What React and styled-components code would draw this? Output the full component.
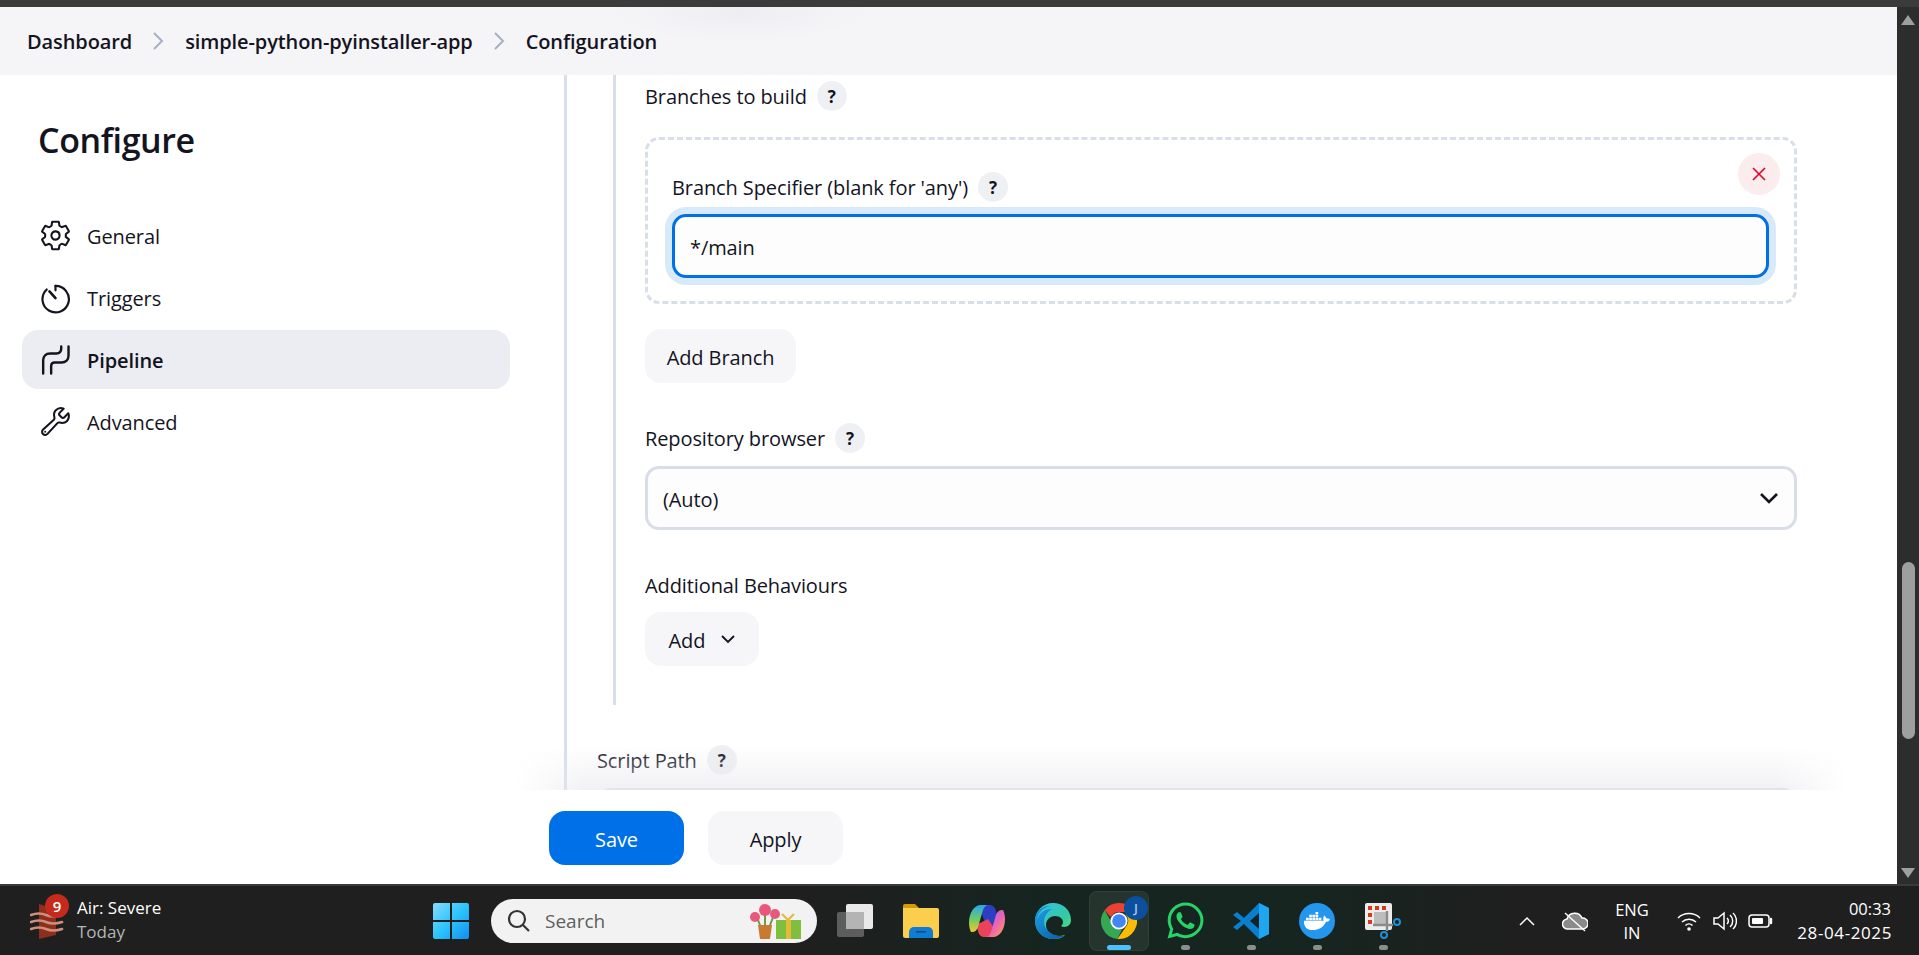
import React from "react";
import styled, { createGlobalStyle } from "styled-components";
import { IoSettingsOutline, IoBuildOutline } from "react-icons/io5";
import { FaWhatsapp, FaDocker } from "react-icons/fa";

const uiFont = `"Open Sans", "Noto Sans", "Liberation Sans", sans-serif`;

const GlobalStyle = createGlobalStyle`
  html, body {
    margin: 0;
    height: 100%;
    overflow: hidden;
    background: #fff;
  }
  #root {
    height: 100%;
  }
  * {
    box-sizing: border-box;
  }
`;

const Shell = styled.div`
  display: flex;
  flex-direction: column;
  height: 955px;
  font-family: ${uiFont};
  color: #14141f;
`;

const TopStrip = styled.div`
  height: 7px;
  flex: none;
  background: #3b3b3b;
`;

const Viewport = styled.div`
  display: flex;
  flex: 1;
  min-height: 0;
`;

const Page = styled.div`
  display: flex;
  flex-direction: column;
  flex: 1;
  min-width: 0;
  background: #fff;
`;

const Breadcrumbs = styled.nav`
  display: flex;
  align-items: center;
  height: 68px;
  flex: none;
  padding-left: 27px;
  background: radial-gradient(ellipse 130px 32px at 740px 4px, #eeeef2, rgba(238, 238, 242, 0)), #f5f5f8;
  font-size: 20px;
  font-weight: 550;
  letter-spacing: -0.1px;
`;

const Crumb = styled.span`
  white-space: nowrap;
`;

const CrumbSep = styled.svg`
  width: 12px;
  height: 18px;
  margin: 0 21px 0 20px;
  fill: none;
  stroke: #a4b0c6;
  stroke-width: 2;
`;

const Body = styled.div`
  display: flex;
  flex: 1;
  min-height: 0;
`;

const Sidebar = styled.aside`
  width: 564px;
  flex: none;
  padding: 41px 54px 0 22px;
`;

const Heading = styled.h1`
  margin: 0 0 42px 16px;
  font-size: 34px;
  line-height: 48px;
  font-weight: 600;
  letter-spacing: -0.4px;
`;

const SideItem = styled.div`
  display: flex;
  align-items: center;
  gap: 15px;
  height: 59px;
  margin-bottom: 3px;
  padding: 2px 0 0 17px;
  border-radius: 16px;
  font-size: 20px;
  letter-spacing: -0.1px;
  font-weight: ${(p) => (p.$active ? 600 : 400)};
  background: ${(p) => (p.$active ? "#ecedf2" : "transparent")};

  svg {
    width: 33px;
    height: 33px;
    flex: none;
    margin-top: -2px;
  }
`;

const Main = styled.main`
  flex: 1;
  min-width: 0;
  overflow: hidden;
  padding-right: 100px;
`;

const Section = styled.div`
  border-left: 3px solid #d8dfea;
  padding-left: 30px;
`;

const NestedSection = styled.div`
  margin-left: 16px;
  border-left: 3px solid #d8dfea;
  padding: 6px 0 39px 29px;
`;

const LabelRow = styled.div`
  display: flex;
  align-items: center;
  gap: 10px;
  height: 30px;
  margin-top: ${(p) => p.$top || 0}px;
  font-size: 20px;
  letter-spacing: -0.1px;
  white-space: nowrap;
`;

const Help = styled.span`
  display: flex;
  align-items: center;
  justify-content: center;
  width: 30px;
  height: 30px;
  border-radius: 50%;
  background: #eef0f3;
  font-size: 17px;
  font-weight: 700;
  letter-spacing: 0;
`;

const RepeatBox = styled.div`
  position: relative;
  margin-top: 26px;
  height: 167px;
  padding: 32px 25px 0 24px;
  border: 3px dashed #d8dfea;
  border-radius: 14px;
`;

const CloseButton = styled.button`
  position: absolute;
  top: 13px;
  right: 14px;
  display: flex;
  align-items: center;
  justify-content: center;
  width: 42px;
  height: 42px;
  padding: 0;
  border: 0;
  border-radius: 50%;
  background: #fbeced;

  svg {
    width: 16px;
    height: 16px;
    stroke: #e6002a;
    stroke-width: 1.6;
    fill: none;
  }
`;

const Field = styled.div`
  display: flex;
  align-items: center;
  justify-content: space-between;
  height: 64px;
  margin-top: ${(p) => p.$top || 0}px;
  padding: 2px 15px 0;
  border: 3px solid ${(p) => (p.$focus ? "#0070e8" : "#d8dde8")};
  border-radius: 14px;
  background: #fdfdfd;
  font-size: 20px;
  letter-spacing: -0.1px;
  box-shadow: ${(p) => (p.$focus ? "0 0 0 7px #d8e9fa" : "none")};
`;

const FieldChevron = styled.svg`
  width: 20px;
  height: 12px;
  margin: -2px 0 0;
  fill: none;
  stroke: #14141f;
  stroke-width: 2.6;
`;

const Button = styled.button`
  display: flex;
  align-items: center;
  justify-content: center;
  gap: 16px;
  width: ${(p) => p.$w}px;
  height: 54px;
  margin-top: ${(p) => p.$top || 0}px;
  padding: 2px 0 0;
  border: 0;
  border-radius: 16px;
  font-family: inherit;
  font-size: 20px;
  letter-spacing: -0.1px;
  color: ${(p) => (p.$primary ? "#fff" : "#14141f")};
  background: ${(p) => (p.$primary ? "#0070e8" : "#f6f6f9")};
  font-weight: ${(p) => (p.$primary ? 500 : 400)};
`;

const SmallChevron = styled.svg`
  width: 14px;
  height: 9px;
  margin-top: -1px;
  fill: none;
  stroke: #14141f;
  stroke-width: 1.9;
`;

const Footer = styled.footer`
  position: relative;
  display: flex;
  gap: 24px;
  height: 94px;
  flex: none;
  padding: 21px 0 0 549px;
  background: #fff;

  &::before {
    content: "";
    position: absolute;
    left: 515px;
    right: 50px;
    bottom: 100%;
    height: 44px;
    background: linear-gradient(to bottom, rgba(232, 232, 238, 0), rgba(232, 232, 238, 0.6));
    mask-image: linear-gradient(to right, transparent, #000 70px, #000 calc(100% - 70px), transparent);
    pointer-events: none;
  }
`;

const Scrollbar = styled.div`
  display: flex;
  flex-direction: column;
  align-items: center;
  width: 22px;
  flex: none;
  background: #2d2d2d;
`;

const Thumb = styled.div`
  width: 13px;
  height: 177px;
  margin-top: 537px;
  border-radius: 7px;
  background: #9f9f9f;
`;

const ScrollArrow = styled.svg`
  width: 14px;
  height: 10px;
  margin: ${(p) => p.$m};
  fill: #9f9f9f;
`;

const Taskbar = styled.div`
  display: flex;
  align-items: center;
  height: 71px;
  flex: none;
  border-top: 2px solid #3a3a3a;
  background: linear-gradient(to right, #1f1f1f 0, #1f1f1f 800px, #16251f 1050px, #16251f 1300px, #1f1f1f 1520px);
  font-family: ${uiFont};
  color: #fff;
`;

const Widget = styled.div`
  position: relative;
  display: flex;
  align-items: center;
  width: 418px;
  flex: none;
  padding-left: 30px;
  gap: 13px;

  svg {
    width: 34px;
    height: 38px;
  }
`;

const Badge = styled.span`
  position: absolute;
  left: 45px;
  top: -4px;
  display: flex;
  align-items: center;
  justify-content: center;
  width: 24px;
  height: 24px;
  border-radius: 50%;
  background: #c42b1c;
  font-size: 15px;
  font-weight: 600;
`;

const WidgetText = styled.div`
  display: flex;
  flex-direction: column;
  margin-top: -2px;
  font-size: 17px;
  line-height: 24px;
`;

const Muted = styled.span`
  color: #b5b5b5;
`;

const Slot = styled.div`
  position: relative;
  display: flex;
  align-items: center;
  justify-content: center;
  width: 66px;
  height: 60px;
  flex: none;

  &[data-active="true"]::before {
    content: "";
    position: absolute;
    inset: 0 3px;
    border-radius: 8px;
    background: rgba(255, 255, 255, 0.07);
    border: 1px solid rgba(255, 255, 255, 0.05);
  }

  > svg {
    position: relative;
    width: 36px;
    height: 36px;
  }
`;

const WhatsappIcon = styled(FaWhatsapp)`
  && {
    width: 41px;
    height: 41px;
  }
  color: #25d366;
`;

const RunDot = styled.span`
  position: absolute;
  left: 50%;
  bottom: 1px;
  height: 5px;
  width: ${(p) => (p.$active ? 24 : 9)}px;
  margin-left: ${(p) => (p.$active ? -12 : -4)}px;
  border-radius: 3px;
  background: ${(p) => (p.$active ? "#4cc2ff" : "#8a8f8c")};
`;

const ProfileBadge = styled.span`
  position: absolute;
  right: 4px;
  top: 5px;
  display: flex;
  align-items: center;
  justify-content: center;
  width: 24px;
  height: 24px;
  border-radius: 50%;
  background: #0b4f9e;
  color: #a9c6ea;
  font-size: 13px;
  font-weight: 600;
`;

const SearchBox = styled.div`
  display: flex;
  align-items: center;
  width: 326px;
  height: 44px;
  flex: none;
  margin: 0 5px 0 7px;
  padding: 0 14px 0 16px;
  border-radius: 22px;
  background: #f2f2f2;
  color: #5e5e5e;
  font-size: 19px;
`;

const SearchIcon = styled.svg`
  width: 23px;
  height: 23px;
  margin-right: 15px;
  fill: none;
  stroke: #333;
  stroke-width: 2.2;
`;

const SearchArt = styled.svg`
  width: 52px;
  height: 36px;
  margin-left: auto;
  margin-right: 1px;
`;

const Tray = styled.div`
  display: flex;
  align-items: center;
  margin-left: auto;
  padding-right: 28px;
  color: #fff;
`;

const TrayIcon = styled.svg`
  width: ${(p) => p.$w}px;
  height: 24px;
  margin-right: ${(p) => p.$mr}px;
  flex: none;
  fill: none;
  stroke: #fff;
  stroke-width: 1.5;
`;

const Lang = styled.div`
  display: flex;
  flex-direction: column;
  align-items: center;
  width: 50px;
  margin-right: 19px;
  font-size: 16.5px;
  line-height: 23px;
`;

const Clock = styled.div`
  display: flex;
  flex-direction: column;
  align-items: flex-end;
  width: 117px;
  font-size: 16.5px;
  line-height: 24px;
`;

const ClockDate = styled.span`
  font-size: 17px;
  letter-spacing: 0.6px;
  margin-right: -1px;
`;

function WeatherIcon() {
  return (
    <svg viewBox="0 0 34 38">
      <path d="M9 2 L26 7 V33 L9 37 Z" fill="#8c2f1c" />
      <path d="M1 13 q8 -3 15 0 t16 0 M1 20 q8 -3 15 0 t16 0 M1 27 q8 -3 15 0 t16 0" stroke="#d08f7c" strokeWidth="2.6" fill="none" strokeLinecap="round" />
    </svg>
  );
}

function WindowsLogo() {
  return (
    <svg viewBox="0 0 36 36">
      <defs>
        <linearGradient id="win" x1="0" y1="0" x2="1" y2="1">
          <stop offset="0" stopColor="#86dcff" />
          <stop offset="0.5" stopColor="#2dc4fb" />
          <stop offset="1" stopColor="#0f8ff0" />
        </linearGradient>
      </defs>
      <path d="M2 0h15v17H0V2a2 2 0 0 1 2-2zM19 0h15a2 2 0 0 1 2 2v15H19zM0 19h17v17H2a2 2 0 0 1-2-2zM19 19h17v15a2 2 0 0 1-2 2H19z" fill="url(#win)" />
    </svg>
  );
}

function TaskView() {
  return (
    <svg viewBox="0 0 36 36">
      <rect x="0" y="9" width="27" height="25" rx="2" fill="#5d5d5d" />
      <rect x="9" y="1" width="27" height="25" rx="2" fill="#e9e9e9" />
      <rect x="9" y="9" width="18" height="17" fill="#b4b4b4" />
    </svg>
  );
}

function Explorer() {
  return (
    <svg viewBox="0 0 36 36">
      <path d="M0 3a2 2 0 0 1 2-2h10l4 4H0z" fill="#d19b0c" />
      <path d="M0 5h34a2 2 0 0 1 2 2v26a2 2 0 0 1-2 2H2a2 2 0 0 1-2-2z" fill="#fbcf4d" />
      <path d="M6 35v-6a5 5 0 0 1 5-5h14a5 5 0 0 1 5 5v6z" fill="#0f7dd3" />
      <rect x="13" y="28" width="10" height="1.6" fill="#0b4f90" />
    </svg>
  );
}

function Copilot() {
  return (
    <svg viewBox="0 0 36 36">
      <defs>
        <linearGradient id="cpA" x1="0" y1="0" x2="0" y2="1">
          <stop offset="0" stopColor="#2aa6f2" />
          <stop offset="0.55" stopColor="#6fce5c" />
          <stop offset="1" stopColor="#f7c531" />
        </linearGradient>
        <linearGradient id="cpB" x1="0" y1="0" x2="1" y2="1">
          <stop offset="0" stopColor="#8a6cf4" />
          <stop offset="0.55" stopColor="#ee62b4" />
          <stop offset="1" stopColor="#f9a850" />
        </linearGradient>
      </defs>
      <path d="M20 2c4 0 6 2 7 6l5 18-12 6-8-24c1-4 4-6 8-6z" fill="#2a3fc4" />
      <path d="M16 34c-4 0-6-2-7-6l-2-6 12-6 8 12c-1 4-4 6-8 6z" fill="#e8435a" />
      <path d="M12 2h8c-3 0-5 2-6 5l-5 17c-1 3-3 5-6 5H2c-1-2-2-5-2-9C0 10 5 2 12 2z" fill="url(#cpA)" />
      <path d="M24 34h-8c3 0 5-2 6-5l5-17c1-3 3-5 6-5h1c1 2 2 5 2 9 0 10-5 18-12 18z" fill="url(#cpB)" />
    </svg>
  );
}

function Edge() {
  return (
    <svg viewBox="0 0 36 36">
      <defs>
        <linearGradient id="edA" x1="0" y1="0" x2="1" y2="1">
          <stop offset="0" stopColor="#35c1f1" />
          <stop offset="0.6" stopColor="#34c9a0" />
          <stop offset="1" stopColor="#66eb6e" />
        </linearGradient>
        <linearGradient id="edB" x1="0" y1="0" x2="1" y2="1">
          <stop offset="0" stopColor="#1b9de2" />
          <stop offset="1" stopColor="#0c59a4" />
        </linearGradient>
      </defs>
      <path d="M18 0C8 0 0 8 0 18c0 10 8 18 18 18 5 0 9-1 12-4-9 3-19-1-19-10 0-5 4-9 9-9s8 3 8 6c0 2-1 3-2 4 3 2 10 1 10-6C36 7 28 0 18 0z" fill="url(#edA)" />
      <path d="M0 18C0 8 8 2 16 3 8 4 2 10 2 18c0 10 8 18 17 18C8 36 0 28 0 18z" fill="url(#edB)" />
      <path d="M2 17C4 9 11 6 17 6c-4 2-8 7-8 13 0 8 8 15 20 14-3 2-7 3-11 3C8 36 1 27 2 17z" fill="url(#edB)" />
    </svg>
  );
}

function Chrome() {
  return (
    <svg viewBox="0 0 36 36">
      <path d="M18 0a18 18 0 0 1 15.6 9H18a9 9 0 0 0-8.2 5.3L3.6 7.2A18 18 0 0 1 18 0z" fill="#ea4335" />
      <path d="M3.6 7.2l7.8 13.5A9 9 0 0 0 21 26.5l-4.6 9.4A18 18 0 0 1 3.6 7.2z" fill="#34a853" />
      <path d="M33.6 9A18 18 0 0 1 16.4 35.9L25.8 22.500A9 9 0 0 0 25 12z" fill="#fbbc04" />
      <circle cx="18" cy="18" r="8.6" fill="#fff" />
      <circle cx="18" cy="18" r="6.8" fill="#4285f4" />
    </svg>
  );
}

function VsCode() {
  return (
    <svg viewBox="0 0 36 36">
      <path d="M26 0l10 5v26l-10 5-15-15-7 6-4-3 8-6-8-6 4-3 7 6z" fill="#0a7fcf" />
      <path d="M26 0l10 5v26l-10 5z" fill="#20a5f1" />
      <path d="M26 10v16l-9-8z" fill="#16222a" />
    </svg>
  );
}

function DockerBadge() {
  return (
    <svg viewBox="0 0 36 36">
      <circle cx="18" cy="18" r="18" fill="#2496ed" />
      <FaDocker x="5" y="5" size={26} color="#fff" />
    </svg>
  );
}

function SnipTool() {
  return (
    <svg viewBox="0 0 36 36">
      <rect x="0" y="0" width="27" height="27" rx="2" fill="#ececec" />
      <rect x="9" y="9" width="14" height="14" fill="#bdbdbd" />
      <path d="M3 3h4v4H3zM10 3h4v4h-4zM17 3h4v4h-4zM3 10h4v4H3zM3 17h4v4H3z" fill="#d13a1e" />
      <path d="M8 22h20M22 8v20" stroke="#8b8b8b" strokeWidth="2.4" />
      <circle cx="32" cy="19" r="3" fill="none" stroke="#1e8fd6" strokeWidth="2" />
      <circle cx="19" cy="32" r="3" fill="none" stroke="#1e8fd6" strokeWidth="2" />
    </svg>
  );
}

export default function App() {
  return (
    <Shell>
      <GlobalStyle />
      <TopStrip />
      <Viewport>
        <Page>
          <Breadcrumbs>
            <Crumb>Dashboard</Crumb>
            <CrumbSep viewBox="0 0 12 18"><path d="M2 1l8 8-8 8" /></CrumbSep>
            <Crumb>simple-python-pyinstaller-app</Crumb>
            <CrumbSep viewBox="0 0 12 18"><path d="M2 1l8 8-8 8" /></CrumbSep>
            <Crumb>Configuration</Crumb>
          </Breadcrumbs>
          <Body>
            <Sidebar>
              <Heading>Configure</Heading>
              <SideItem>
                <IoSettingsOutline />
                General
              </SideItem>
              <SideItem>
                <svg viewBox="0 0 30 30" fill="none" stroke="#14141f" strokeWidth="2" strokeLinecap="round">
                  <path d="M15 4.500a12 12 0 1 1-8 3.200" />
                  <path d="M15 4.500v4" />
                  <path d="M9.500 9.500l5.500 6" strokeWidth="2.400" />
                </svg>
                Triggers
              </SideItem>
              <SideItem $active>
                <svg viewBox="60 400 95 95" fill="none" stroke="#14141f" strokeWidth="7" strokeLinecap="round">
                  <path d="M72 488v-38c0-12 8-20 20-20h18c9 0 14-6 14-14v-6" />
                  <path d="M95 488v-22c0-6 4-10 10-10h20c12 0 20-8 20-20v-26" />
                </svg>
                Pipeline
              </SideItem>
              <SideItem>
                <IoBuildOutline />
                Advanced
              </SideItem>
            </Sidebar>
            <Main>
              <Section>
                <NestedSection>
                  <LabelRow>
                    Branches to build
                    <Help>?</Help>
                  </LabelRow>
                  <RepeatBox>
                    <CloseButton aria-label="Delete">
                      <svg viewBox="0 0 16 16"><path d="M2 2l12 12M14 2L2 14" /></svg>
                    </CloseButton>
                    <LabelRow>
                      Branch Specifier (blank for 'any')
                      <Help>?</Help>
                    </LabelRow>
                    <Field $focus $top={12}>*/main</Field>
                  </RepeatBox>
                  <Button $w={151} $top={25}>Add Branch</Button>
                  <LabelRow $top={40}>
                    Repository browser
                    <Help>?</Help>
                  </LabelRow>
                  <Field $top={13}>
                    (Auto)
                    <FieldChevron viewBox="0 0 20 12"><path d="M2 2l8 8 8-8" /></FieldChevron>
                  </Field>
                  <LabelRow $top={40}>Additional Behaviours</LabelRow>
                  <Button $w={114} $top={12}>
                    Add
                    <SmallChevron viewBox="0 0 14 9"><path d="M1 1l6 6 6-6" /></SmallChevron>
                  </Button>
                </NestedSection>
                <LabelRow $top={40}>
                  Script Path
                  <Help>?</Help>
                </LabelRow>
                <Field $top={13} />
              </Section>
            </Main>
          </Body>
          <Footer>
            <Button $w={135} $primary>Save</Button>
            <Button $w={135}>Apply</Button>
          </Footer>
        </Page>
        <Scrollbar>
          <ScrollArrow viewBox="0 0 14 10" $m="8px 0 0"><path d="M7 0l7 10H0z" /></ScrollArrow>
          <Thumb />
          <ScrollArrow viewBox="0 0 14 10" $m="auto 0 6px"><path d="M7 10L0 0h14z" /></ScrollArrow>
        </Scrollbar>
      </Viewport>
      <Taskbar>
        <Widget>
          <WeatherIcon />
          <Badge>9</Badge>
          <WidgetText>
            <span>Air: Severe</span>
            <Muted>Today</Muted>
          </WidgetText>
        </Widget>
        <Slot><WindowsLogo /></Slot>
        <SearchBox>
          <SearchIcon viewBox="0 0 23 23"><circle cx="10" cy="10" r="8" /><path d="M16 16l6 6" /></SearchIcon>
          Search
          <SearchArt viewBox="0 0 52 36">
            <path d="M8 22h14l-2 14H10z" fill="#c97a32" />
            <path d="M15 22V12M10 22L6 12M20 22l4-10" stroke="#6f9a4a" strokeWidth="2" />
            <circle cx="15" cy="7" r="6" fill="#e8587a" />
            <circle cx="5" cy="14" r="5" fill="#e8587a" />
            <circle cx="25" cy="11" r="5" fill="#e8587a" />
            <rect x="26" y="17" width="25" height="19" fill="#7fbf3f" />
            <rect x="36" y="17" width="5" height="19" fill="#e6b93a" />
            <path d="M38 17l-6-6M38 17l6-6" stroke="#e6b93a" strokeWidth="2" />
          </SearchArt>
        </SearchBox>
        <Slot><TaskView /></Slot>
        <Slot><Explorer /></Slot>
        <Slot><Copilot /></Slot>
        <Slot><Edge /></Slot>
        <Slot data-active="true">
          <Chrome />
          <ProfileBadge>J</ProfileBadge>
          <RunDot $active />
        </Slot>
        <Slot>
          <WhatsappIcon />
          <RunDot />
        </Slot>
        <Slot>
          <VsCode />
          <RunDot />
        </Slot>
        <Slot>
          <DockerBadge />
          <RunDot />
        </Slot>
        <Slot>
          <SnipTool />
          <RunDot />
        </Slot>
        <Tray>
          <TrayIcon $w={18} $mr={26} viewBox="0 0 18 24" strokeWidth="2"><path d="M2 16l7-7 7 7" /></TrayIcon>
          <TrayIcon $w={26} $mr={19} viewBox="0 0 26 24" stroke="none">
            <path d="M6 20a5 5 0 0 1-1-10 8 8 0 0 1 15-1 5.500 5.500 0 0 1 1 11z" fill="#8a8a8a" />
            <path d="M3 4l20 18" stroke="#fff" strokeWidth="1.4" />
          </TrayIcon>
          <Lang>
            <span>ENG</span>
            <span>IN</span>
          </Lang>
          <TrayIcon $w={26} $mr={11} viewBox="0 0 26 24">
            <path d="M2 9a16 16 0 0 1 22 0M6 13a10 10 0 0 1 14 0M9.500 16.500a5 5 0 0 1 7 0" />
            <circle cx="13" cy="20" r="1.800" fill="#fff" stroke="none" />
          </TrayIcon>
          <TrayIcon $w={24} $mr={11} viewBox="0 0 24 24">
            <path d="M1 9h4l6-5v16l-6-5H1z" />
            <path d="M14 9a4 4 0 0 1 0 6M17 6a8 8 0 0 1 0 12M20 4a11 11 0 0 1 0 16" />
          </TrayIcon>
          <TrayIcon $w={26} $mr={0} viewBox="0 0 26 24">
            <rect x="1" y="6" width="20" height="12" rx="3" />
            <rect x="4" y="9" width="11" height="6" rx="1" fill="#fff" stroke="none" />
            <path d="M23 10v4" strokeWidth="2.400" strokeLinecap="round" />
          </TrayIcon>
          <Clock>
            <span>00:33</span>
            <ClockDate>28-04-2025</ClockDate>
          </Clock>
        </Tray>
      </Taskbar>
    </Shell>
  );
}
